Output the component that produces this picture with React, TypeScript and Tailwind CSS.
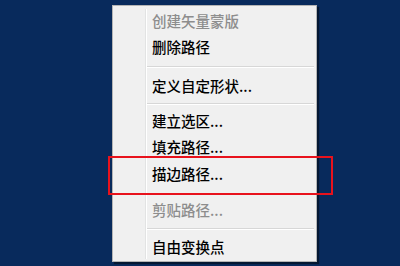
import React from 'react';

type Item =
  | { kind: 'item'; label: string; disabled?: boolean; h: string; extra?: string }
  | { kind: 'sep'; h: string };

const items: Item[] = [
  { kind: 'item', label: '创建矢量蒙版', disabled: true, h: 'h-[25px]' },
  { kind: 'item', label: '删除路径', h: 'h-[26px]' },
  { kind: 'sep', h: 'h-[13px]' },
  { kind: 'item', label: '定义自定形状...', h: 'h-[26px]' },
  { kind: 'sep', h: 'h-[9px]' },
  { kind: 'item', label: '建立选区...', h: 'h-[26px]' },
  { kind: 'item', label: '填充路径...', h: 'h-[26px]' },
  { kind: 'item', label: '描边路径...', h: 'h-[28px]' },
  { kind: 'item', label: '剪贴路径...', disabled: true, h: 'h-[35px]', extra: 'pt-[10px]' },
  { kind: 'sep', h: 'h-[12px]' },
  { kind: 'item', label: '自由变换点', h: 'h-[24px]' },
];

const App: React.FC = () => {
  return (
    <div
      className="relative w-[400px] h-[266px] bg-[#082a5c] overflow-hidden pt-[5px] pl-[112px]"
      style={{ fontFamily: '"Noto Sans CJK SC", "Noto Sans", sans-serif' }}
    >
      {/* Context menu */}
      <div className="w-[205px] bg-[#f0f0f0] border border-[#b4b4b4] shadow-[2px_2px_1px_rgba(0,0,0,0.45)] pt-[3px] pb-[2px] flex">
        {/* Gutter */}
        <div className="w-[33px] shrink-0 border-r border-[#e2e3e3] shadow-[1px_0_0_#ffffff]" />
        <div className="flex-1 flex flex-col">
          {items.map((it, i) =>
            it.kind === 'sep' ? (
              <div key={i} className={`${it.h} flex items-center pl-[1px] pr-[2px]`}>
                <div className="w-full h-[2px] border-t border-[#d7d7d7] border-b border-b-[#ffffff]" />
              </div>
            ) : (
              <div
                key={i}
                className={`${it.h} ${it.extra ?? ''} flex items-center pl-[6px] text-[14.5px] font-medium leading-none ${
                  it.disabled ? 'text-[#8d8d8d]' : 'text-black'
                }`}
              >
                {it.label}
              </div>
            )
          )}
        </div>
      </div>

      {/* Red highlight annotation */}
      <div className="absolute left-[108px] top-[156px] w-[225px] h-[39px] border-2 border-[#e8121c]" />
    </div>
  );
};

export default App;
